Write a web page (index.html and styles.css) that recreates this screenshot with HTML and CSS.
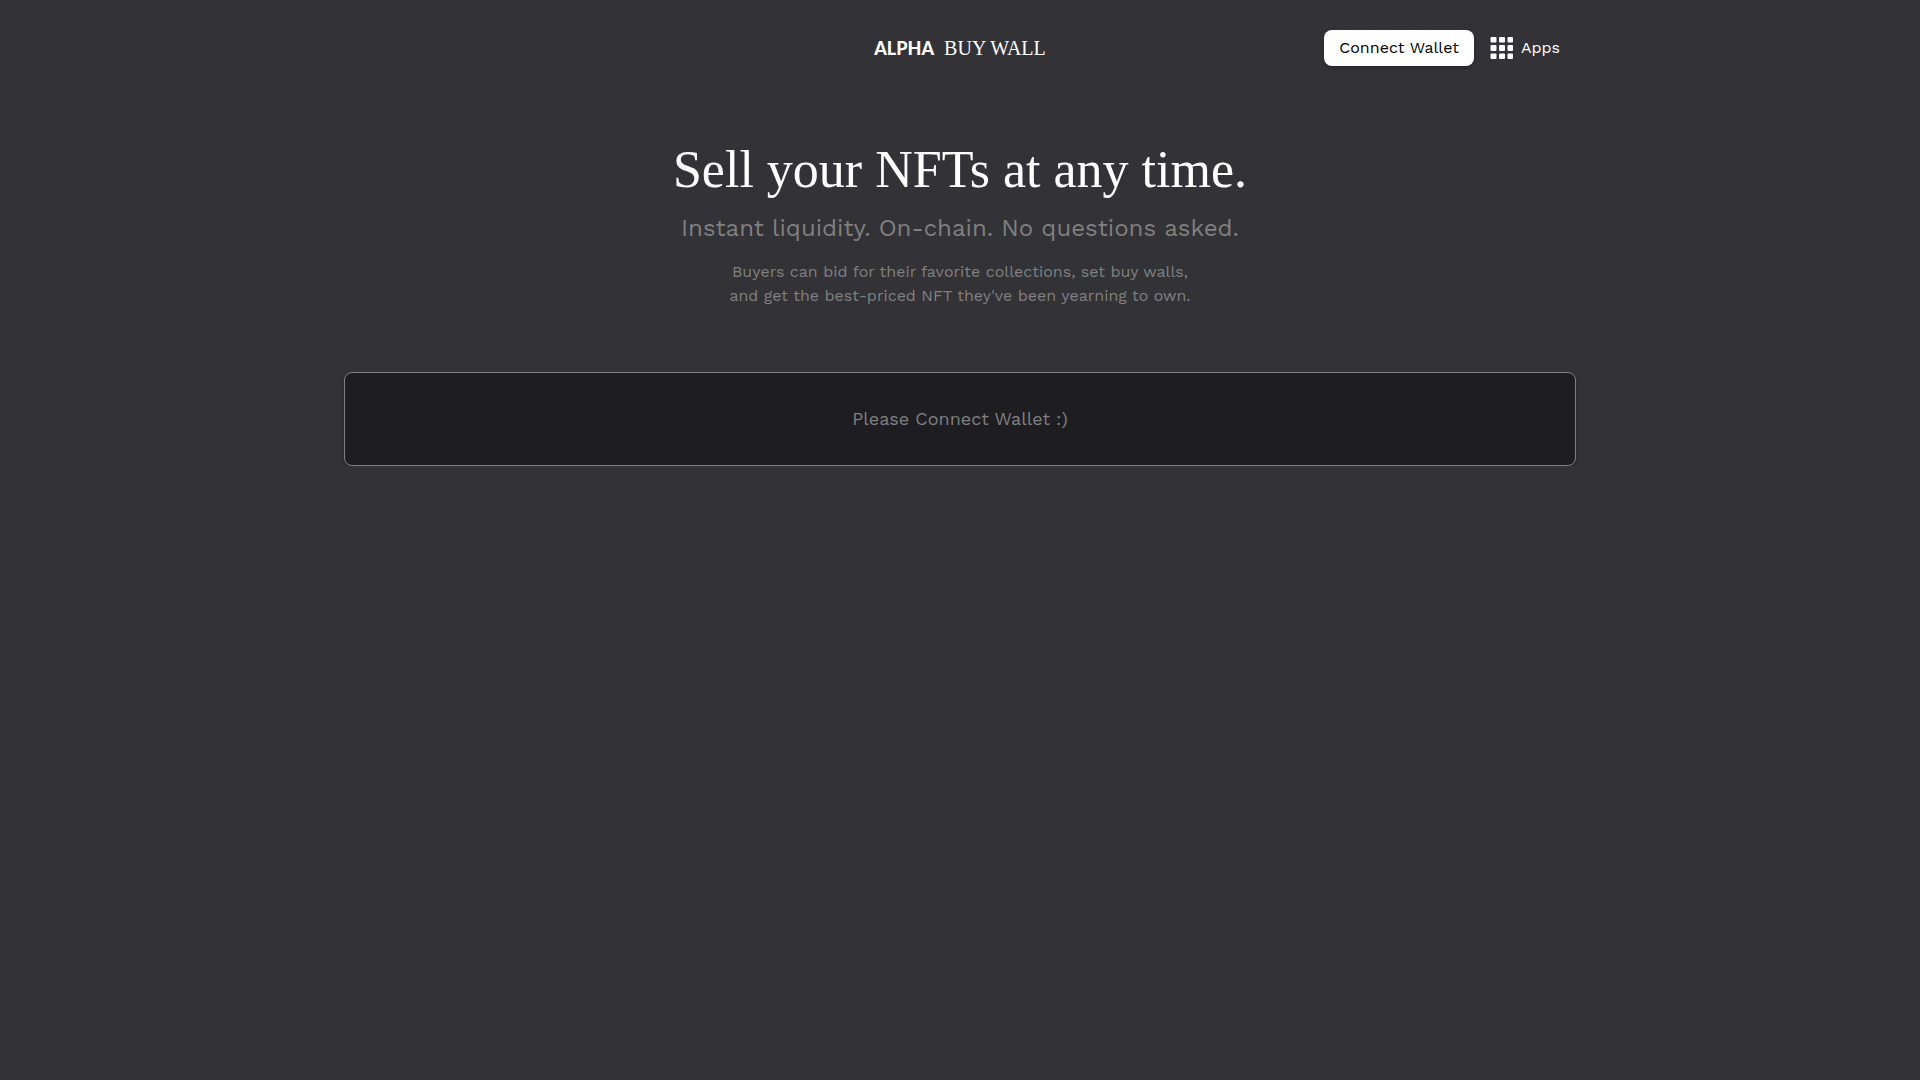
FILE: index.html
```html
<!DOCTYPE html>
<html lang="en">
<head>
<meta charset="utf-8">
<meta name="viewport" content="width=device-width, initial-scale=1">
<title>Alpha Buy Wall</title>
<link rel="stylesheet" href="styles.css">
</head>
<body>
<div class="container">
  <header class="header">
    <a class="logo" href="#"><strong class="logo-alpha">ALPHA</strong><span class="logo-wall">BUY WALL</span></a>
    <nav class="actions">
      <button class="connect" type="button">Connect Wallet</button>
      <button class="apps" type="button">
        <svg class="apps-icon" viewBox="0 0 24 24" aria-hidden="true">
          <g fill="currentColor">
            <rect x="0.5" y="1" width="6" height="5.5" rx="1"/><rect x="9" y="1" width="6" height="5.5" rx="1"/><rect x="17.5" y="1" width="5.5" height="5.5" rx="1"/>
            <rect x="0.5" y="9" width="6" height="6" rx="1"/><rect x="9" y="9" width="6" height="6" rx="1"/><rect x="17.5" y="9" width="5.5" height="6" rx="1"/>
            <rect x="0.5" y="17.5" width="6" height="5.5" rx="1"/><rect x="9" y="17.5" width="6" height="5.5" rx="1"/><rect x="17.5" y="17.5" width="5.5" height="5.5" rx="1"/>
          </g>
        </svg>
        Apps
      </button>
    </nav>
  </header>
  <main>
    <section class="hero">
      <h1 class="title">Sell your NFTs at any time.</h1>
      <p class="tagline">Instant liquidity. On-chain. No questions asked.</p>
      <p class="intro">Buyers can bid for their favorite collections, set buy walls,<br>and get the best-priced NFT they've been yearning to own.</p>
    </section>
    <section class="notice">Please Connect Wallet :)</section>
  </main>
</div>
</body>
</html>
```
FILE: styles.css
```css
* { box-sizing: border-box; }
body {
  margin: 0;
  background: #333237;
  color: #808080;
  font: 400 16px/24px "Work Sans", Inter, sans-serif;
}
button { border: 0; font: inherit; cursor: pointer; }
.container { max-width: 1280px; margin: 0 auto; padding: 0 24px; }
.header {
  display: grid;
  grid-template-columns: 1fr auto 1fr;
  align-items: center;
  height: 96px;
  padding: 0 16px;
}
.logo {
  grid-column: 2;
  display: flex;
  align-items: baseline;
  gap: 10px;
  color: #fff;
  text-decoration: none;
}
.logo-alpha { font: 900 18px/24px Lato, sans-serif; }
.logo-wall { font: 20px/24px "Liberation Serif", serif; }
.actions { display: flex; justify-content: flex-end; align-items: center; gap: 16px; }
.connect {
  height: 36px;
  padding: 0 15px;
  border-radius: 8px;
  background: #fff;
  color: #000;
  box-shadow: 0 2px 4px rgba(0, 0, 0, .25);
}
.apps {
  display: flex;
  align-items: center;
  gap: 7px;
  padding: 0;
  background: none;
  color: #fff;
}
.apps-icon { width: 24px; height: 24px; }
.hero { padding-top: 42px; text-align: center; }
.title {
  margin: 0;
  color: #fff;
  font: 400 52px/64px "Liberation Serif", serif;
}
.tagline { margin: 8px 0 14px; font-size: 24px; line-height: 36px; }
.intro { margin: 0; }
.notice {
  margin-top: 64px;
  padding: 32px 24px;
  border: 1px solid #808080;
  border-radius: 8px;
  background: #1e1d22;
  box-shadow: 0 2px 4px rgba(0, 0, 0, .2);
  font-size: 18px;
  line-height: 28px;
  text-align: center;
}
```
